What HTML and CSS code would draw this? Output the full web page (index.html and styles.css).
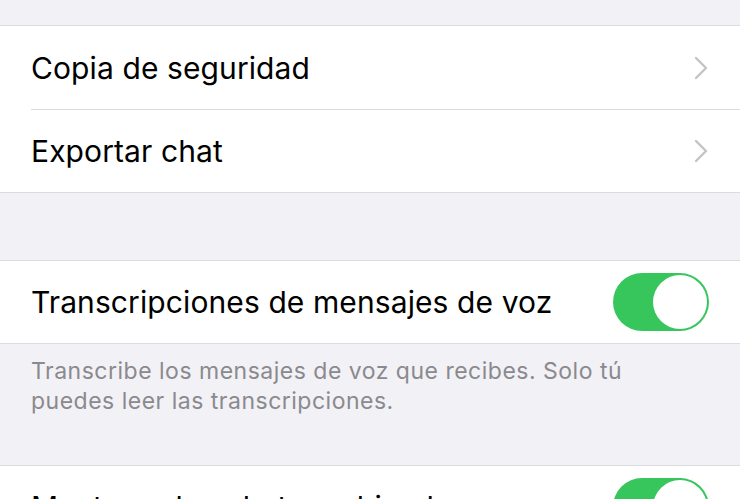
FILE: index.html
```html
<!DOCTYPE html>
<html lang="es">
<head>
<meta charset="utf-8">
<link rel="stylesheet" href="styles.css">
</head>
<body>
<div class="page">
  <div class="gap-top"></div>
  <div class="group">
    <div class="row">
      <span class="label">Copia de seguridad</span>
      <svg class="chev" width="16" height="24" viewBox="0 0 16 24"><path d="M3 2 L13 12 L3 22" fill="none" stroke="#c4c4c7" stroke-width="2.4" stroke-linecap="round" stroke-linejoin="round"/></svg>
    </div>
    <div class="row">
      <span class="label">Exportar chat</span>
      <svg class="chev" width="16" height="24" viewBox="0 0 16 24"><path d="M3 2 L13 12 L3 22" fill="none" stroke="#c4c4c7" stroke-width="2.4" stroke-linecap="round" stroke-linejoin="round"/></svg>
    </div>
  </div>
  <div class="gap-mid"></div>
  <div class="group">
    <div class="row row-toggle">
      <span class="label">Transcripciones de mensajes de voz</span>
      <span class="toggle"><span class="knob"></span></span>
    </div>
  </div>
  <div class="footer">Transcribe los mensajes de voz que recibes. Solo tú puedes leer las transcripciones.</div>
  <div class="group">
    <div class="row row-toggle">
      <span class="label">Mantener los chats archivados</span>
      <span class="toggle"><span class="knob"></span></span>
    </div>
  </div>
</div>
</body>
</html>
```
FILE: styles.css
```css
html, body {
  margin: 0;
  padding: 0;
  background: #f2f1f6;
  font-family: Inter, "Noto Sans", sans-serif;
}
.page {
  width: 740px;
  height: 499px;
  overflow: hidden;
}
.gap-top {
  height: 25px;
}
.gap-mid {
  height: 67px;
}
.group {
  background: #fff;
  border-top: 1px solid #dcdce0;
  border-bottom: 1px solid #dcdce0;
  padding-left: 31px;
}
.row {
  height: 83px;
  display: flex;
  align-items: center;
  justify-content: space-between;
  padding-right: 31px;
  box-sizing: border-box;
}
.row + .row {
  border-top: 1px solid #dcdce0;
}
.row-toggle {
  height: 82px;
}
.label {
  font-size: 30px;
  color: #000;
  letter-spacing: 0.1px;
}
.chev {
  display: block;
}
.toggle {
  width: 96px;
  height: 58px;
  border-radius: 29px;
  background: #36c65c;
  display: flex;
  align-items: center;
  justify-content: flex-end;
  padding: 2px;
  box-sizing: border-box;
}
.knob {
  width: 54px;
  height: 54px;
  border-radius: 50%;
  background: #fff;
}
.footer {
  height: 121px;
  box-sizing: border-box;
  padding: 12px 80px 0 31px;
  font-size: 23px;
  line-height: 30px;
  color: #8a8a8e;
  letter-spacing: 0.5px;
}
```
